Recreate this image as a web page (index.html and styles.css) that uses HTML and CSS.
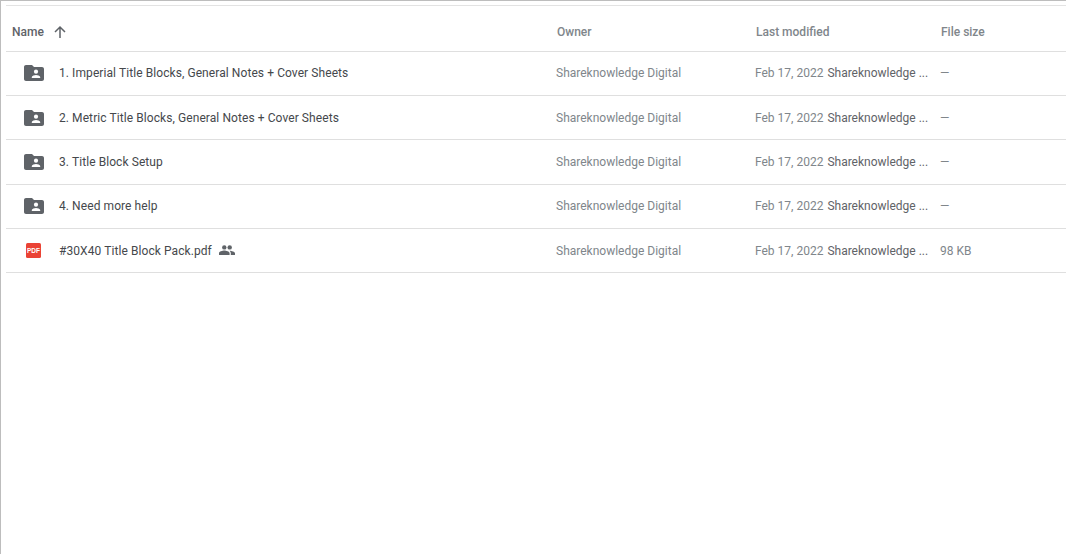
FILE: index.html
```html
<!DOCTYPE html>
<html lang="en">
<head>
<meta charset="utf-8">
<title>Files</title>
<link rel="stylesheet" href="styles.css">
</head>
<body>
<svg class="defs" width="0" height="0" aria-hidden="true">
  <symbol id="shared-folder" viewBox="0 0 20 20">
    <path fill="#5f6368" d="M8 2H2C.9 2 0 2.900 0 4v12c0 1.100.9 2 2 2h16c1.100 0 2-.9 2-2V6c0-1.100-.9-2-2-2h-8L8 2z"/>
    <circle fill="#fff" cx="12" cy="8.700" r="2.100"/>
    <path fill="#fff" d="M7.800 15v-1c0-1.400 2.800-2.100 4.200-2.100s4.200.7 4.200 2.100v1H7.800z"/>
  </symbol>
</svg>
<main class="frame">
  <div class="list">
    <div class="row head">
      <div class="name-head">Name
        <svg class="arrow" viewBox="0 0 14 14"><path d="M7 13V2M2 7l5-5 5 5" fill="none" stroke="#5f6368" stroke-width="1.500"/></svg>
      </div>
      <div class="owner-head">Owner</div>
      <div class="mod-head">Last modified</div>
      <div class="size-head">File size</div>
    </div>
    <div class="row item">
      <div class="name"><svg class="icon"><use href="#shared-folder"/></svg><span>1. Imperial Title Blocks, General Notes + Cover Sheets</span></div>
      <div class="owner">Shareknowledge Digital</div>
      <div class="mod"><span class="date">Feb 17, 2022</span><span class="by">Shareknowledge ...</span></div>
      <div class="size">—</div>
    </div>
    <div class="row item">
      <div class="name"><svg class="icon"><use href="#shared-folder"/></svg><span>2. Metric Title Blocks, General Notes + Cover Sheets</span></div>
      <div class="owner">Shareknowledge Digital</div>
      <div class="mod"><span class="date">Feb 17, 2022</span><span class="by">Shareknowledge ...</span></div>
      <div class="size">—</div>
    </div>
    <div class="row item">
      <div class="name"><svg class="icon"><use href="#shared-folder"/></svg><span>3. Title Block Setup</span></div>
      <div class="owner">Shareknowledge Digital</div>
      <div class="mod"><span class="date">Feb 17, 2022</span><span class="by">Shareknowledge ...</span></div>
      <div class="size">—</div>
    </div>
    <div class="row item">
      <div class="name"><svg class="icon"><use href="#shared-folder"/></svg><span>4. Need more help</span></div>
      <div class="owner">Shareknowledge Digital</div>
      <div class="mod"><span class="date">Feb 17, 2022</span><span class="by">Shareknowledge ...</span></div>
      <div class="size">—</div>
    </div>
    <div class="row item">
      <div class="name">
        <svg class="icon pdf" viewBox="0 0 15 15"><rect width="15" height="15" rx="1.500" fill="#ea4335"/><text x="7.500" y="10" text-anchor="middle" class="pdf-label">PDF</text></svg>
        <span>#30X40 Title Block Pack.pdf</span>
        <svg class="people" viewBox="0 0 16 10"><circle cx="5.300" cy="2.400" r="2.200" fill="#5f6368"/><circle cx="10.700" cy="2.400" r="2.200" fill="#5f6368"/><path fill="#5f6368" d="M0 10V8.300C0 6.500 3.500 5.600 5.300 5.600s5.300.9 5.300 2.700V10H0zM11.800 10V8.200c0-1-.5-1.800-1.300-2.500 2 .1 5.500 1 5.500 2.600V10h-4.200z"/></svg>
      </div>
      <div class="owner">Shareknowledge Digital</div>
      <div class="mod"><span class="date">Feb 17, 2022</span><span class="by">Shareknowledge ...</span></div>
      <div class="size">98 KB</div>
    </div>
  </div>
</main>
</body>
</html>
```
FILE: styles.css
```css
html, body {
  margin: 0;
  height: 100%;
  background: #fff;
}
.defs {
  position: absolute;
}
.frame {
  box-sizing: border-box;
  height: 554px;
  border-top: 1px solid #bdbdbd;
  border-left: 1px solid #bdbdbd;
  padding: 4px 0 0 5px;
  overflow: hidden;
  font-family: Roboto, "Liberation Sans", sans-serif;
  font-size: 12px;
}
.list {
  border-top: 1px solid #e3e3e3;
}
.row {
  display: grid;
  grid-template-columns: 549px 199px 185px 1fr;
  align-items: center;
  box-sizing: border-box;
  border-bottom: 1px solid #dfdfdf;
}
.head {
  height: 45.500px;
  color: #80868b;
  font-weight: 500;
  padding-top: 7px;
}
.item {
  height: 44.400px;
  color: #80868b;
}
.name-head {
  display: flex;
  align-items: center;
  gap: 9px;
  padding-left: 6px;
  color: #5f6368;
}
.arrow {
  width: 14px;
  height: 14px;
}
.owner-head {
  padding-left: 2px;
}
.mod-head {
  padding-left: 2px;
}
.size-head {
  padding-left: 2px;
}
.name {
  display: flex;
  align-items: center;
  padding-left: 18px;
  color: #45484c;
  font-weight: 450;
  letter-spacing: 0.080px;
}
.icon {
  flex: none;
  width: 20px;
  height: 20px;
  margin-right: 15px;
}
.pdf {
  width: 15px;
  height: 15px;
  margin-left: 2px;
  margin-right: 18px;
}
.pdf-label {
  fill: #fff;
  font-size: 6.500px;
  font-weight: 700;
  font-family: "Liberation Sans", sans-serif;
  letter-spacing: 0;
}
.people {
  flex: none;
  width: 16px;
  height: 10px;
  margin-left: 7px;
  margin-top: -2px;
}
.owner {
  padding-left: 1px;
}
.mod {
  display: flex;
  gap: 4px;
  padding-left: 1px;
  white-space: nowrap;
}
.by {
  color: #5f6368;
}
.size {
  padding-left: 1px;
}
```
